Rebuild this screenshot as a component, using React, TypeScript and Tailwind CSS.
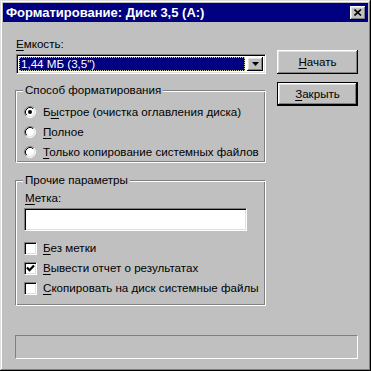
import React from "react";

const U = ({ children }: { children: React.ReactNode }) => (
  <span className="underline decoration-1 underline-offset-[2px]">{children}</span>
);

const Radio = ({ checked }: { checked?: boolean }) => (
  <svg width="12" height="12" viewBox="0 0 12 12" className="shrink-0">
    <circle cx="6" cy="6" r="5" fill="#fff" />
    <path d="M2.11 9.89 A5.5 5.5 0 0 1 9.89 2.11" fill="none" stroke="#808080" strokeWidth="1" />
    <path d="M9.89 2.11 A5.5 5.5 0 0 1 2.11 9.89" fill="none" stroke="#ffffff" strokeWidth="1" />
    <path d="M2.82 9.18 A4.5 4.5 0 0 1 9.18 2.82" fill="none" stroke="#000" strokeWidth="1" />
    <path d="M9.18 2.82 A4.5 4.5 0 0 1 2.82 9.18" fill="none" stroke="#dfdfdf" strokeWidth="1" />
    {checked && <circle cx="6" cy="6" r="2" fill="#000" />}
  </svg>
);

const Check = ({ checked }: { checked?: boolean }) => (
  <div className="w-[13px] h-[13px] shrink-0 bg-white border border-t-[#808080] border-l-[#808080] border-r-white border-b-white shadow-[inset_1px_1px_#000,inset_-1px_-1px_#dfdfdf] flex items-center justify-center">
    {checked && (
      <svg width="9" height="9" viewBox="0 0 9 9">
        <path d="M1 3.5 L3.5 6.2 L8 1.5" fill="none" stroke="#000" strokeWidth="2.2" />
      </svg>
    )}
  </div>
);

const raised =
  "shadow-[inset_-1px_-1px_#000,inset_1px_1px_#fff,inset_-2px_-2px_#808080,inset_2px_2px_#dfdfdf]";

export default function App() {
  return (
    <div
      className={`w-[371px] h-[371px] bg-[#c0c0c0] p-[3px] flex flex-col text-black text-[11.6px] whitespace-nowrap font-['Liberation_Sans',Arial,sans-serif] shadow-[inset_-1px_-1px_#000,inset_1px_1px_#dfdfdf,inset_-2px_-2px_#808080,inset_2px_2px_#fff]`}
    >
      {/* Title bar */}
      <div className="h-[19px] bg-[#000080] flex items-center justify-between pl-[3px] pr-[2px]">
        <span className="text-white font-bold text-[13px] leading-[19px]">
          Форматирование: Диск 3,5 (A:)
        </span>
        <div className={`w-[16px] h-[14px] bg-[#c0c0c0] ${raised} flex items-center justify-center`}>
          <svg width="8" height="7" viewBox="0 0 8 7" className="mb-[1px]">
            <path d="M0.5 0.5 L7 6.5 M7 0.5 L0.5 6.5" stroke="#000" strokeWidth="1.6" fill="none" />
          </svg>
        </div>
      </div>

      {/* Body */}
      <div className="flex-1 flex flex-col pl-[12px] pr-[10px]">
        <div className="flex">
          {/* Left column */}
          <div className="w-[251px] flex flex-col">
            <div className="mt-[15px] h-[14px] leading-[14px] pl-[1px]">
              <U>Е</U>мкость:
            </div>
            <div className="mt-[3px] ml-[1px] h-[20px] bg-white border border-t-[#808080] border-l-[#808080] border-r-white border-b-white shadow-[inset_1px_1px_#000,inset_-1px_-1px_#dfdfdf] flex p-[2px]">
              <div className="flex-1 bg-[#000080] border border-dotted border-[#c8c8a0] text-white leading-[12px] pl-[1px] flex items-center mr-[2px]">
                1,44 МБ (3,5")
              </div>
              <div className={`w-[16px] h-[14px] bg-[#c0c0c0] ${raised} flex items-center justify-center`}>
                <svg width="7" height="4" viewBox="0 0 7 4">
                  <path d="M0 0 H7 L3.5 4 Z" fill="#000" />
                </svg>
              </div>
            </div>

            {/* Group 1 */}
            <div className="mt-[16px] flex flex-col border border-t-[#808080] border-l-[#808080] border-r-white border-b-white shadow-[inset_1px_1px_#fff,inset_-1px_-1px_#808080]">
              <span className="-mt-[8px] ml-[7px] px-[2px] self-start bg-[#c0c0c0] leading-[14px]">
                Способ форматирования
              </span>
              <div className="pt-[5px] pl-[8px] flex flex-col">
                <div className="h-[20px] flex items-center gap-[7px]">
                  <Radio checked />
                  <span>
                    Б<U>ы</U>строе (очистка оглавления диска)
                  </span>
                </div>
                <div className="h-[20px] flex items-center gap-[7px]">
                  <Radio />
                  <span>
                    <U>П</U>олное
                  </span>
                </div>
                <div className="h-[20px] flex items-center gap-[7px]">
                  <Radio />
                  <span>
                    <U>Т</U>олько копирование системных файлов
                  </span>
                </div>
              </div>
            </div>

            {/* Group 2 */}
            <div className="mt-[17px] flex flex-col border border-t-[#808080] border-l-[#808080] border-r-white border-b-white shadow-[inset_1px_1px_#fff,inset_-1px_-1px_#808080] pb-[7px]">
              <span className="-mt-[8px] ml-[7px] px-[2px] self-start bg-[#c0c0c0] leading-[14px]">
                Прочие параметры
              </span>
              <div className="pl-[8px] flex flex-col">
                <div className="mt-[4px] h-[14px] leading-[14px] pl-[1px]">
                  <U>М</U>етка:
                </div>
                <div className="mt-[3px] w-[223px] h-[23px] bg-white border border-t-[#808080] border-l-[#808080] border-r-white border-b-white shadow-[inset_1px_1px_#000,inset_-1px_-1px_#dfdfdf]" />
                <div className="mt-[7px] h-[20px] flex items-center gap-[6px]">
                  <Check />
                  <span>
                    <U>Б</U>ез метки
                  </span>
                </div>
                <div className="h-[20px] flex items-center gap-[6px]">
                  <Check checked />
                  <span>
                    <U>В</U>ывести отчет о результатах
                  </span>
                </div>
                <div className="h-[20px] flex items-center gap-[6px]">
                  <Check />
                  <span>
                    <U>С</U>копировать на диск системные файлы
                  </span>
                </div>
              </div>
            </div>
          </div>

          {/* Right column */}
          <div className="ml-[11px] w-[81px] flex flex-col gap-[8px] pt-[28px]">
            <button className={`h-[24px] bg-[#c0c0c0] ${raised} flex items-center justify-center`}>
              <span>
                <U>Н</U>ачать
              </span>
            </button>
            <button className="h-[24px] bg-[#c0c0c0] border border-black shadow-[inset_-1px_-1px_#000,inset_1px_1px_#fff,inset_-2px_-2px_#808080,inset_2px_2px_#dfdfdf] flex items-center justify-center">
              <span>
                <U>З</U>акрыть
              </span>
            </button>
          </div>
        </div>

        {/* Status bar */}
        <div className="mt-auto mb-[9px] h-[24px] border border-t-[#808080] border-l-[#808080] border-r-white border-b-white" />
      </div>
    </div>
  );
}
